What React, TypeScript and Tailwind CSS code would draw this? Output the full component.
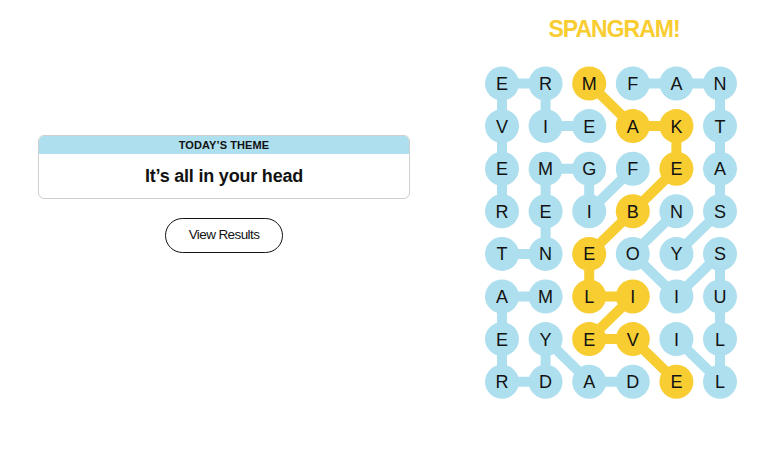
import React from 'react';

const BLUE = '#aedfee';
const YELLOW = '#f8cd32';

const letters = [
  'ERMFAN',
  'VIEAKT',
  'EMGFEA',
  'REIBNS',
  'TNEOYS',
  'AMLIIU',
  'EYEVIL',
  'RDADEL',
];

// found words as paths of [row, col]
const words: [number, number][][] = [
  // REVERIE
  [[3, 0], [2, 0], [1, 0], [0, 0], [0, 1], [1, 1], [1, 2]],
  // FIGMENT
  [[2, 3], [3, 2], [2, 2], [2, 1], [3, 1], [4, 1], [4, 0]],
  // DAYDREAM
  [[7, 3], [7, 2], [6, 1], [7, 1], [7, 0], [6, 0], [5, 0], [5, 1]],
  // FANTASY
  [[0, 3], [0, 4], [0, 5], [1, 5], [2, 5], [3, 5], [4, 4]],
  // ILLUSION
  [[6, 4], [7, 5], [6, 5], [5, 5], [4, 5], [5, 4], [4, 3], [3, 4]],
];

const spangram: [number, number][] = [
  [0, 2], [1, 3], [1, 4], [2, 4], [3, 3], [4, 2], [5, 2], [5, 3], [6, 2], [6, 3], [7, 4],
];

const cx = (c: number) => 19 + c * 43.6;
const cy = (r: number) => 19.5 + r * 42.6;

function Board() {
  const isSpan = (r: number, c: number) => spangram.some(([a, b]) => a === r && b === c);

  const segments = (path: [number, number][], color: string, key: string) =>
    path.slice(1).map(([r, c], i) => {
      const [pr, pc] = path[i];
      return (
        <line
          key={`${key}-${i}`}
          x1={cx(pc)}
          y1={cy(pr)}
          x2={cx(c)}
          y2={cy(r)}
          stroke={color}
          strokeWidth={10}
        />
      );
    });

  return (
    <svg width="262" height="340" viewBox="0 0 262 340">
      {words.map((w, i) => segments(w, BLUE, `w${i}`))}
      {segments(spangram, YELLOW, 'span')}
      {letters.map((row, r) =>
        row.split('').map((ch, c) => (
          <g key={`${r}-${c}`}>
            <circle cx={cx(c)} cy={cy(r)} r={17} fill={isSpan(r, c) ? YELLOW : BLUE} />
            <text
              x={cx(c)}
              y={cy(r) + 6.5}
              textAnchor="middle"
              fontSize="18"
              fill="#121212"
              fontFamily="'Liberation Sans', Arial, sans-serif"
            >
              {ch}
            </text>
          </g>
        ))
      )}
    </svg>
  );
}

export default function App() {
  return (
    <div className="flex h-[449px] w-[768px] bg-white text-[#121212] font-['Liberation_Sans',Arial,sans-serif] overflow-hidden">
      {/* Theme + results */}
      <div className="flex w-[448px] flex-col items-center pt-[135px]">
        <div className="w-[372px] overflow-hidden rounded-[6px] border border-[#cfcfcf]">
          <div className="flex h-[18px] items-center justify-center bg-[#aedfee] text-[11px] font-bold uppercase tracking-[0.1px]">
            Today’s Theme
          </div>
          <div className="flex h-[44px] items-center justify-center text-[18px] font-bold tracking-[-0.2px]">
            It’s all in your head
          </div>
        </div>
        <button className="mt-[19px] h-[35px] w-[118px] rounded-full border border-[#121212] bg-white text-[13.5px] tracking-[-0.6px]">
          View Results
        </button>
      </div>

      {/* Board */}
      <div className="ml-[35px] flex w-[262px] flex-col items-center pt-[15px]">
        <div className="text-[23px] font-bold leading-[28px] tracking-[-1px] text-[#f8cd32]">SPANGRAM!</div>
        <div className="mt-[21px]">
          <Board />
        </div>
      </div>
    </div>
  );
}
